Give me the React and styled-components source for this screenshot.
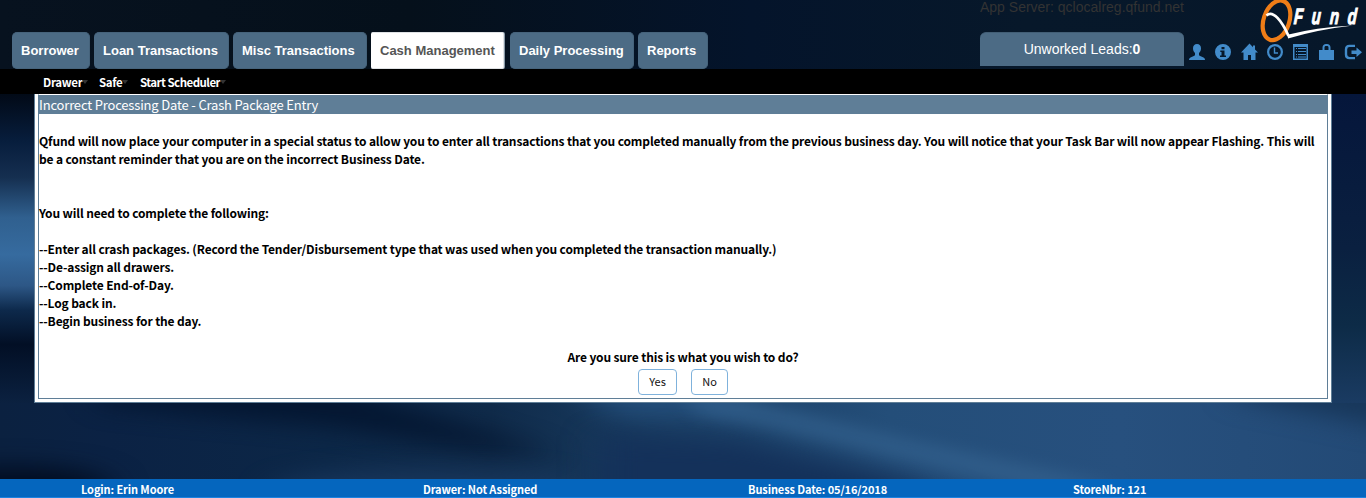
import React from 'react';
import styled, { createGlobalStyle } from 'styled-components';

const Global = createGlobalStyle`
  * { box-sizing: border-box; }
  body { margin: 0; overflow: hidden; background: #061530; }
`;

const humanist = `"Noto Sans CJK SC", "Open Sans", sans-serif`;
const arial = `"Liberation Sans", Arial, sans-serif`;

const Page = styled.div`
  position: relative;
  width: 1366px;
  height: 498px;
  display: flex;
  flex-direction: column;
  font-family: ${humanist};
  overflow: hidden;
`;

const Backdrop = styled.svg`
  position: absolute;
  inset: 0;
  z-index: -1;
`;

const Header = styled.header`
  height: 69px;
  display: flex;
  justify-content: space-between;
`;

const Tabs = styled.nav`
  display: flex;
  align-items: flex-end;
  gap: 4px;
  padding-left: 12px;
`;

const Tab = styled.a`
  width: ${(p) => p.$w}px;
  height: 37px;
  padding-left: 9px;
  border-radius: 5px;
  border: 1px solid ${(p) => (p.$active ? '#dfe2e5' : '#46637b')};
  border-left-width: 0;
  background: ${(p) => (p.$active ? '#fff' : '#4c6b85')};
  color: ${(p) => (p.$active ? '#555' : '#fff')};
  ${(p) => p.$active && 'border-radius: 2px; box-shadow: 1px 0 0 #8798a6; margin-right: 2px;'}
  font: bold 13px/35px ${arial};
  white-space: nowrap;
`;

const HeaderRight = styled.div`
  display: flex;
  width: 386px;
`;

const ServerColumn = styled.div`
  width: 204px;
  display: flex;
  flex-direction: column;
`;

const ServerName = styled.div`
  height: 32px;
  color: #333;
  font: 14px/15px ${arial};
  white-space: nowrap;
`;

const Leads = styled.div`
  height: 34px;
  border-radius: 6px 6px 0 0;
  border-top: 1px solid #425e75;
  background: #4c6b85;
  color: #fff;
  font: 14px/32px ${arial};
  text-align: center;
`;

const BrandColumn = styled.div`
  width: 182px;
  display: flex;
  flex-direction: column;
`;

const Logo = styled.svg`
  width: 106px;
  height: 43px;
  margin-left: 76px;
`;

const IconRow = styled.div`
  display: flex;
  gap: 10px;
  padding: 1px 0 0 5px;
`;

const IconSvg = styled.svg`
  width: 16px;
  height: 16px;
  flex: none;
  color: #428bca;
  overflow: visible;
`;

const MenuBar = styled.nav`
  height: 25px;
  background: #000;
  display: flex;
  padding-left: 43px;
`;

const MenuItem = styled.a`
  display: flex;
  align-items: center;
  width: ${(p) => p.$w}px;
  height: 25px;
  color: #fff;
  font-weight: bold;
  font-size: 11.5px;
  letter-spacing: ${(p) => p.$ls || 0}px;
  white-space: nowrap;
`;

const Caret = styled.i`
  flex: none;
  width: 0;
  border: 3px solid transparent;
  border-top: 4px solid #333;
  border-bottom: 0;
`;

const Panel = styled.main`
  width: 1298px;
  height: 309px;
  margin-left: 34px;
  padding: 0 3px 3px;
  border: 1px solid #5f7e97;
  border-top: 0;
  background: #fff;
`;

const PanelInner = styled.section`
  height: 305px;
  border: 1px solid #5f7e97;
  border-top: 1px solid #fff;
  display: flex;
  flex-direction: column;
`;

const PanelTitle = styled.h1`
  margin: 0;
  height: 19px;
  background: #5f7e97;
  color: #fff;
  font-size: 13px;
  font-weight: 400;
  line-height: 20px;
  letter-spacing: -0.17px;
  white-space: nowrap;
`;

const Copy = styled.div`
  padding-top: 18px;
  display: flex;
  flex-direction: column;
`;

const Line = styled.div`
  height: 18px;
  color: #000;
  font-size: 12px;
  font-weight: bold;
  line-height: 18px;
  letter-spacing: -0.142px;
  white-space: nowrap;
  ${(p) => p.$center && 'text-align: center;'}
`;

const Actions = styled.div`
  display: flex;
  gap: 14px;
  padding: 3px 0 0 599px;
`;

const Button = styled.button`
  width: ${(p) => p.$w}px;
  height: 26px;
  padding: 0 0 2px;
  border: 1px solid #7fb2dc;
  border-radius: 4px;
  background: #fff;
  color: #111;
  font: 11px/22px ${humanist};
`;

const Footer = styled.footer`
  margin-top: auto;
  height: 19px;
  background: #0566be;
  border-bottom: 1px solid #1c82e0;
  display: flex;
  padding-left: 81px;
`;

const FooterItem = styled.span`
  width: ${(p) => p.$w}px;
  color: #fff;
  font-size: 11px;
  font-weight: bold;
  line-height: 20px;
  letter-spacing: -0.1px;
  white-space: nowrap;
`;

const Icon = ({ children }) => (
  <IconSvg viewBox="0 0 16 16" fill="currentColor">{children}</IconSvg>
);

const Background = () => (
  <Backdrop width="1366" height="498">
    <defs>
      <linearGradient id="top" x1="0" x2="1" y1="0" y2="0">
        <stop offset="0" stopColor="#07121f" />
        <stop offset=".3" stopColor="#05101b" />
        <stop offset=".55" stopColor="#04142b" />
        <stop offset=".75" stopColor="#07182a" />
        <stop offset="1" stopColor="#06172a" />
      </linearGradient>
      <linearGradient id="left" x1="0" x2="0" y1="94" y2="403" gradientUnits="userSpaceOnUse">
        <stop offset="0" stopColor="#020a17" />
        <stop offset=".15" stopColor="#071d3c" />
        <stop offset=".27" stopColor="#152f50" />
        <stop offset=".4" stopColor="#30608f" />
        <stop offset=".52" stopColor="#366b9f" />
        <stop offset=".62" stopColor="#2d5786" />
        <stop offset=".7" stopColor="#0d294b" />
        <stop offset=".81" stopColor="#020f25" />
        <stop offset="1" stopColor="#0b2140" />
      </linearGradient>
      <linearGradient id="right" x1="0" x2="0" y1="94" y2="403" gradientUnits="userSpaceOnUse">
        <stop offset="0" stopColor="#05163b" />
        <stop offset=".5" stopColor="#0a2040" />
        <stop offset=".75" stopColor="#0d2b47" />
        <stop offset="1" stopColor="#1a3b62" />
      </linearGradient>
      <linearGradient id="bottom" x1="0" x2="1366" y1="0" y2="0" gradientUnits="userSpaceOnUse">
        <stop offset="0" stopColor="#0b2140" />
        <stop offset=".08" stopColor="#0b2244" />
        <stop offset=".24" stopColor="#0c2747" />
        <stop offset=".36" stopColor="#102b4a" />
        <stop offset=".48" stopColor="#193c61" />
        <stop offset=".65" stopColor="#244e79" />
        <stop offset=".82" stopColor="#27507e" />
        <stop offset="1" stopColor="#234a76" />
      </linearGradient>
      <filter id="soft" x="-30%" y="-100%" width="160%" height="300%" colorInterpolationFilters="sRGB"><feGaussianBlur stdDeviation="18 12" /></filter>
      <filter id="beam" x="-20%" y="-40%" width="140%" height="180%" colorInterpolationFilters="sRGB"><feGaussianBlur stdDeviation="10 8" /></filter>
      <clipPath id="low"><rect y="403" width="1366" height="95" /></clipPath>
    </defs>
    <rect width="1366" height="94" fill="url(#top)" />
    <rect y="94" width="34" height="309" fill="url(#left)" />
    <rect x="1332" y="94" width="34" height="309" fill="url(#right)" />
    <rect y="403" width="1366" height="95" fill="url(#bottom)" />
    <g clipPath="url(#low)">
      <path d="M100 385H330L440 418L560 455L480 450L330 426L100 405Z" fill="#03142e" opacity=".9" filter="url(#soft)" />
      <ellipse cx="15" cy="487" rx="95" ry="20" fill="#010c20" filter="url(#soft)" />
      <ellipse cx="430" cy="490" rx="160" ry="20" fill="#1b3a61" opacity=".8" filter="url(#soft)" />
      <path d="M570 385H720L760 415L620 418Z" fill="#285584" opacity=".75" filter="url(#soft)" />
      <path d="M600 435L740 440L900 475L980 510H600Z" fill="#14315a" filter="url(#soft)" />
      <path d="M680 395L740 397L900 438L1120 485L1040 492L850 446L700 414Z" fill="#34628f" opacity=".7" filter="url(#beam)" />
      <path d="M1240 380H1400V430Q1320 413 1240 398Z" fill="#173659" filter="url(#soft)" />
    </g>
  </Backdrop>
);

export default function App() {
  return (
    <Page>
      <Global />
      <Background />
      <Header>
        <Tabs>
          <Tab $w={78}>Borrower</Tab>
          <Tab $w={135}>Loan Transactions</Tab>
          <Tab $w={134}>Misc Transactions</Tab>
          <Tab $w={133} $active>Cash Management</Tab>
          <Tab $w={124}>Daily Processing</Tab>
          <Tab $w={70}>Reports</Tab>
        </Tabs>
        <HeaderRight>
          <ServerColumn>
            <ServerName>App Server: qclocalreg.qfund.net</ServerName>
            <Leads>Unworked Leads:<b>0</b></Leads>
          </ServerColumn>
          <BrandColumn>
            <Logo viewBox="1260 0 106 43">
              <ellipse cx="1276.500" cy="20.300" rx="12.800" ry="20.500" transform="rotate(19 1276.500 20.300)" fill="none" stroke="#ef7d17" strokeWidth="4.200" />
              <path d="M1266.500 15.500C1273 9.500 1282 21 1288.500 36" fill="none" stroke="#fff" strokeWidth="2.800" />
              <path d="M1287.500 34.800Q1315 27.500 1353 25.500Q1318 29.500 1288 38.500Z" fill="#fff" />
              <text transform="translate(1293.500 24) skewX(-4) scale(.68 1)" x="0 26 53 79" y="0" fill="#fff" stroke="#fff" strokeWidth="1" fontFamily="Liberation Sans" fontStyle="italic" fontWeight="bold" fontSize="22">Fund</text>
            </Logo>
            <IconRow>
              <Icon><path d="M8 0C5.500 0 4 1.800 4 4.300c0 2 .7 3.500 2 4.800v1.600c0 .7-.5 1-1.200 1.300L1.500 13.400C.5 14 0 14.500 0 16h16c0-1.500-.5-2-1.500-2.600L11.200 12c-.7-.3-1.200-.6-1.200-1.300V9.100c1.300-1.300 2-2.800 2-4.800C12 1.800 10.500 0 8 0Z" /></Icon>
              <Icon><path fillRule="evenodd" d="M8 0a8 8 0 1 0 0 16A8 8 0 0 0 8 0ZM6.500 3h3v2.200h-3ZM5.300 6.500h4.200v5H11V13H5v-1.500h1.500V8H5.300Z" /></Icon>
              <Icon><path d="M8.500-.5 0 8.500h2.500V16h4.500v-5h3v5h4.500V8.500H17L14 5.400V1.500h-2v1.800Z" /></Icon>
              <Icon><circle cx="8" cy="8" r="6.900" fill="none" stroke="currentColor" strokeWidth="2.200" /><path d="M7.500 3.500V9H11" fill="none" stroke="currentColor" strokeWidth="1.400" /></Icon>
              <Icon><path fillRule="evenodd" d="M0 0h15v16H0ZM1.500 3v11.500h12V3ZM3 4h1v1H3ZM5 4h8v1H5ZM3 7h1v1H3ZM5 7h8v1H5ZM3 10h1v1H3ZM5 10h8v1H5ZM3 12.500h1v1H3ZM5 12.500h8v1H5Z" /></Icon>
              <Icon><path fillRule="evenodd" d="M3.500 6V3.500C3.500 1.500 5 0 7 0h1c2 0 3.500 1.500 3.500 3.500V6H15v10H0V6ZM5.500 6h4V3.500c0-1-.5-1.500-1.500-1.500H7c-1 0-1.500.5-1.500 1.500Z" /></Icon>
              <Icon><path d="M10 1.900H4.500Q1 1.900 1 5.400v5.200q0 3.500 3.500 3.500H10" fill="none" stroke="currentColor" strokeWidth="2.400" /><path d="M6.500 6.500h5V3.500L17 8.300 11.500 13v-3h-5Z" /></Icon>
            </IconRow>
          </BrandColumn>
        </HeaderRight>
      </Header>
      <MenuBar>
        <MenuItem $w={56} $ls={-0.3}>Drawer<Caret /></MenuItem>
        <MenuItem $w={41} $ls={-0.4}>Safe<Caret /></MenuItem>
        <MenuItem $w={90} $ls={-0.53}>Start Scheduler<Caret /></MenuItem>
      </MenuBar>
      <Panel>
        <PanelInner>
          <PanelTitle>Incorrect Processing Date - Crash Package Entry</PanelTitle>
          <Copy>
            <Line>Qfund will now place your computer in a special status to allow you to enter all transactions that you completed manually from the previous business day. You will notice that your Task Bar will now appear Flashing. This will</Line>
            <Line>be a constant reminder that you are on the incorrect Business Date.</Line>
            <Line />
            <Line />
            <Line>You will need to complete the following:</Line>
            <Line />
            <Line>--Enter all crash packages. (Record the Tender/Disbursement type that was used when you completed the transaction manually.)</Line>
            <Line>--De-assign all drawers.</Line>
            <Line>--Complete End-of-Day.</Line>
            <Line>--Log back in.</Line>
            <Line>--Begin business for the day.</Line>
            <Line />
            <Line $center>Are you sure this is what you wish to do?</Line>
          </Copy>
          <Actions>
            <Button $w={39}>Yes</Button>
            <Button $w={37}>No</Button>
          </Actions>
        </PanelInner>
      </Panel>
      <Footer>
        <FooterItem $w={342}>Login: Erin Moore</FooterItem>
        <FooterItem $w={325}>Drawer: Not Assigned</FooterItem>
        <FooterItem $w={325}>Business Date: 05/16/2018</FooterItem>
        <FooterItem $w={200}>StoreNbr: 121</FooterItem>
      </Footer>
    </Page>
  );
}
